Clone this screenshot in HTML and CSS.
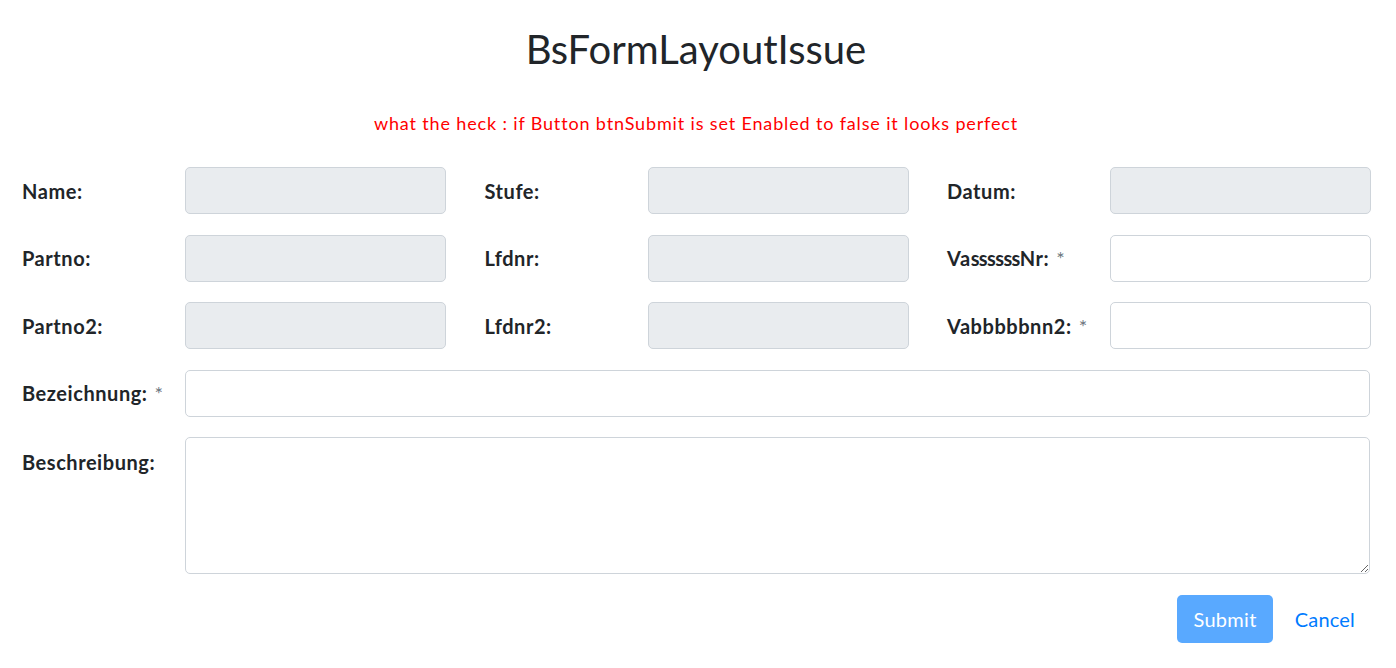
FILE: index.html
```html
<!DOCTYPE html>
<html lang="de">
<head>
<meta charset="utf-8">
<title>BsFormLayoutIssue</title>
<link rel="stylesheet" href="styles.css">
</head>
<body>
<div class="page">
  <h1 class="title">BsFormLayoutIssue</h1>
  <p class="note">what the heck : if Button btnSubmit is set Enabled to false it looks perfect</p>
  <form class="form">
    <div class="grid3">
      <div class="field"><label class="lbl">Name:</label><input class="ctl" disabled></div>
      <div class="field"><label class="lbl">Stufe:</label><input class="ctl" disabled></div>
      <div class="field"><label class="lbl">Datum:</label><input class="ctl" disabled></div>
      <div class="field"><label class="lbl">Partno:</label><input class="ctl" disabled></div>
      <div class="field"><label class="lbl">Lfdnr:</label><input class="ctl" disabled></div>
      <div class="field"><label class="lbl">Va<span class="tight">ssssss</span>Nr:<span class="req">*</span></label><input class="ctl"></div>
      <div class="field"><label class="lbl">Partno2:</label><input class="ctl" disabled></div>
      <div class="field"><label class="lbl">Lfdnr2:</label><input class="ctl" disabled></div>
      <div class="field"><label class="lbl">Vabbbbbnn2:<span class="req">*</span></label><input class="ctl"></div>
    </div>
    <div class="field wide"><label class="lbl">Bezeichnung:<span class="req">*</span></label><input class="ctl"></div>
    <div class="field wide top"><label class="lbl">Beschreibung:</label><textarea class="ctl area"></textarea></div>
    <div class="actions">
      <button type="button" class="btn">Submit</button>
      <a class="link" href="#">Cancel</a>
    </div>
  </form>
</div>
</body>
</html>
```
FILE: styles.css
```css
* { box-sizing: border-box; }
html, body { margin: 0; padding: 0; background: #fff; }
body {
  font-family: "Segoe UI", Lato, "Noto Sans", "Liberation Sans", sans-serif;
  color: #212529;
  width: 1396px;
}
.page { padding: 0 26px 0 22px; }
.title {
  margin: 0;
  padding-top: 25px;
  height: 76px;
  font-size: 40px;
  font-weight: 400;
  line-height: 48px;
  text-align: center;
}
.note {
  margin: 0;
  padding-top: 34px;
  height: 91px;
  color: #ff0000;
  font-size: 18px;
  letter-spacing: 0.85px;
  line-height: 27px;
  text-align: center;
}
.form { display: flex; flex-direction: column; gap: 20.5px; }
.grid3 {
  display: grid;
  grid-template-columns: repeat(3, 424px);
  column-gap: 38.5px;
  row-gap: 20.5px;
}
.field {
  display: grid;
  grid-template-columns: 163px 1fr;
  align-items: center;
}
.field.top { align-items: start; }
.lbl {
  font-weight: 700;
  font-size: 20px;
  letter-spacing: 0.55px;
  line-height: 30px;
  white-space: nowrap;
}
.tight { letter-spacing: -0.6px; }
.field.top .lbl { padding-top: 10px; }
.req {
  font-weight: 400;
  color: #6c757d;
  font-size: 20px;
  letter-spacing: 0;
  margin-left: 7px;
}
.ctl {
  display: block;
  width: 100%;
  height: 47px;
  border: 1px solid #ced4da;
  border-radius: 5px;
  background: #fff;
  font: inherit;
  font-size: 20px;
  padding: 8px 16px;
  margin: 0;
}
.ctl:disabled { background: #e9ecef; }
.area { height: 137px; resize: vertical; }
.actions {
  display: flex;
  justify-content: flex-end;
  align-items: center;
  gap: 22px;
  padding-right: 15px;
}
.btn {
  background: #59a9ff;
  color: #fff;
  border: 0;
  border-radius: 5px;
  font: inherit;
  font-size: 20px;
  letter-spacing: 0.3px;
  height: 48px;
  padding: 0 16px;
  margin: 0;
}
.link {
  color: #007bff;
  text-decoration: none;
  font-size: 20px;
  letter-spacing: 0.2px;
}
```
